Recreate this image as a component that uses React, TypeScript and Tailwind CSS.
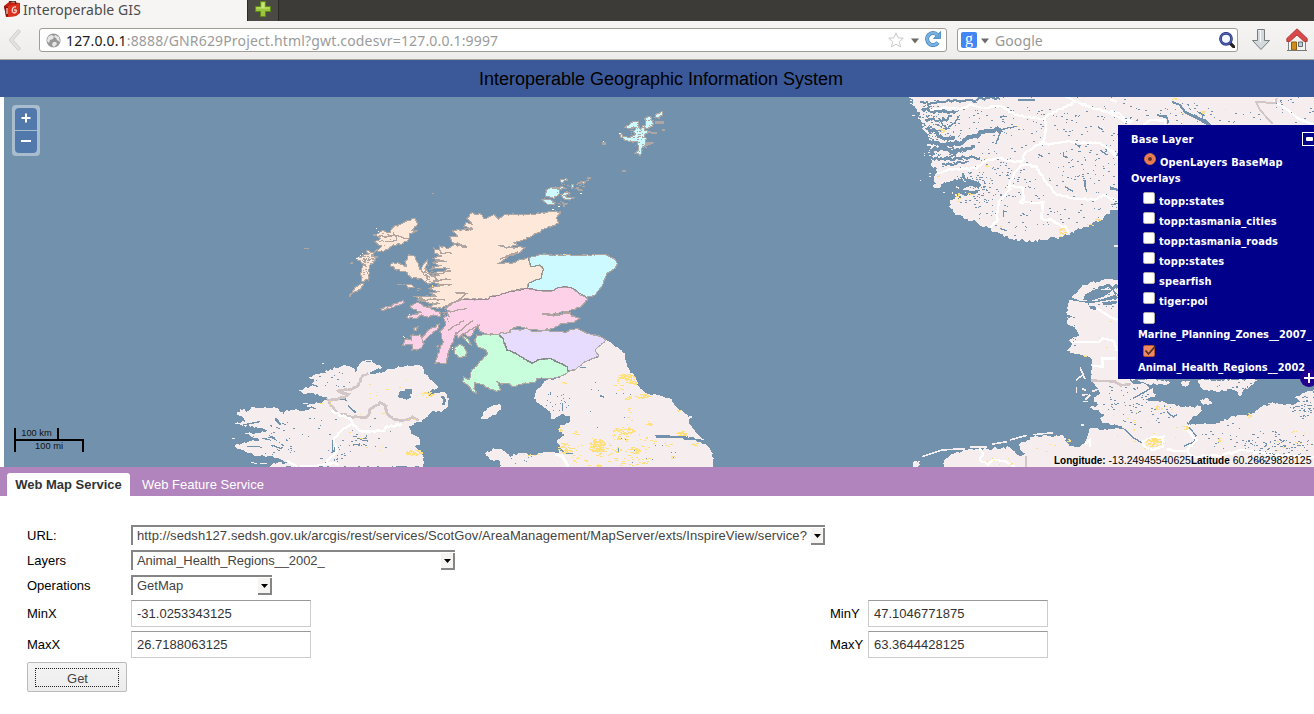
import type { ReactNode } from 'react';

/* ---------- map geometry helpers ---------- */

function createRandom(seed: number) {
  let s = seed * 7919 + 17;
  return () => {
    s = (s + 0x6d2b79f5) | 0;
    let t = Math.imul(s ^ (s >>> 15), 1 | s);
    t = (t + Math.imul(t ^ (t >>> 7), 61 | t)) ^ t;
    return ((t ^ (t >>> 14)) >>> 0) / 4294967296;
  };
}

// Splits every segment and pushes the new points sideways, for a ragged shore.
function ragged(points: string, amount: number, seed = 1, closed = true, step = 7) {
  const random = createRandom(seed);
  const pts = points.trim().split(/\s+/).map((p) => p.split(',').map(Number));
  const out: string[] = [];
  const last = closed ? pts.length : pts.length - 1;
  for (let i = 0; i < last; i++) {
    const [x1, y1] = pts[i];
    const [x2, y2] = pts[(i + 1) % pts.length];
    const len = Math.hypot(x2 - x1, y2 - y1) || 1;
    const n = Math.max(1, Math.round(len / step));
    for (let k = 0; k < n; k++) {
      const t = k / n;
      const d = k === 0 ? 0 : (random() - 0.5) * 2 * amount;
      out.push(
        `${(x1 + (x2 - x1) * t - ((y2 - y1) / len) * d).toFixed(1)},${(y1 + (y2 - y1) * t + ((x2 - x1) / len) * d).toFixed(1)}`,
      );
    }
  }
  if (!closed) out.push(pts[pts.length - 1].join(','));
  return 'M' + out.join('L') + (closed ? 'Z' : '');
}

// cx, cy, rx, ry, count
type Cluster = [number, number, number, number, number];

function specks(clusters: Cluster[], seed: number, long = 2) {
  const random = createRandom(seed);
  let d = '';
  for (const [cx, cy, rx, ry, n] of clusters) {
    for (let i = 0; i < n; i++) {
      const a = random() * Math.PI * 2;
      const r = Math.sqrt(random());
      const x = Math.round((cx + Math.cos(a) * r * rx) / 3) * 3;
      const y = Math.round((cy + Math.sin(a) * r * ry) / 3) * 3;
      const w = 3 + Math.floor(random() * long) * 3;
      d += `M${x},${y}h${w}v3h${-w}z`;
    }
  }
  return d;
}

const WATER = '#7291ad';
const LAND = '#f5edee';
const URBAN = '#ffe07a';
const SHORE = '#ada6a3';

function Tile({ x, y, children }: { x: number; y: number; children: ReactNode }) {
  return <g transform={`translate(${x} ${y}) scale(0.333333)`}>{children}</g>;
}

const highland =
  '395,38 405,45 420,41 432,55 450,50 462,44 475,58 492,45 520,42 550,45 600,40 625,35 662,35 650,55 656,70 620,85 580,105 545,122 520,128 535,136 505,141 475,136 500,144 558,142 540,158 510,166 475,190 515,190 545,178 565,172 572,200 600,195 610,208 603,235 565,250 563,265 535,270 510,275 480,285 450,290 445,298 370,298 330,310 305,325 265,318 300,312 262,308 230,300 262,302 225,290 290,290 270,278 300,275 268,265 285,258 310,255 270,248 295,240 272,232 300,226 275,220 305,215 330,205 278,205 300,197 276,188 310,185 280,175 305,168 284,160 282,145 300,152 300,138 325,146 340,135 380,142 335,125 330,110 352,108 335,92 375,90 400,88 372,80 376,68 395,72 380,55';

const pinkMain =
  '330,310 370,298 445,298 450,290 480,285 510,275 535,270 563,265 600,272 640,272 655,263 680,261 700,266 740,292 742,300 725,318 690,332 640,342 608,342 640,348 690,340 695,348 720,355 700,368 665,370 640,385 600,392 560,388 540,378 515,388 505,400 480,402 440,402 420,395 412,375 400,400 388,412 370,400 355,415 348,398 340,420 325,455 320,490 285,490 292,470 300,445 310,425 300,395 318,375 310,352 325,345 318,325';

const green =
  '410,405 480,402 478,410 490,418 500,450 530,462 575,490 600,478 630,475 660,490 683,500 685,515 660,530 640,535 590,535 585,548 550,550 520,560 505,550 485,553 470,543 482,570 470,575 450,568 430,555 405,548 402,565 410,580 395,572 382,555 368,545 370,530 388,538 395,510 430,475 443,462 435,448 415,442 405,425';

const cyan =
  '565,172 610,162 630,165 665,165 800,165 822,175 832,190 825,205 800,220 785,260 765,285 740,292 720,285 700,266 680,261 655,263 640,272 600,272 563,265 565,250 603,235 610,208 600,195 572,200';

const purple =
  '478,400 510,398 512,388 540,390 560,384 575,394 610,392 680,396 690,388 715,386 735,397 760,405 780,408 797,420 765,450 777,468 735,485 705,510 683,515 683,500 660,490 630,475 600,478 575,490 530,462 500,450 490,418';

const hebrides = [
  '100,105 125,92 150,97 160,82 190,68 225,55 232,72 215,92 234,92 208,102 205,118 190,130 160,135 145,148 130,155 105,153 125,138 105,125 120,115',
  '50,175 85,162 80,152 105,155 95,168 110,172 98,190 88,198 85,240 65,245 62,220 70,192',
  '52,258 70,250 62,268 45,275 30,290 38,272',
  '150,195 160,188 180,192 198,200 195,185 205,165 222,168 235,190 240,208 250,206 275,228 288,238 265,252 240,235 215,235 195,215 170,210',
  '198,255 210,252 222,262 205,265',
  '245,205 262,180 258,205 250,222',
];

const argyllIsles = [
  '210,318 235,308 250,318 270,322 300,338 300,350 280,345 265,352 245,345 225,355 200,352 225,342 245,338 215,325',
  '243,422 260,395 298,372 295,385 270,405 250,424',
  '188,435 195,418 215,420 212,408 240,404 252,430 245,445 215,452 218,435',
  '122,325 150,320 165,310 190,302 193,308 170,316 150,325 125,332',
  '220,388 235,378 230,392',
];

const ireland =
  '235,180 270,170 300,168 265,158 290,150 265,142 300,130 330,118 375,105 395,112 405,128 412,112 430,92 465,100 485,112 470,130 510,118 555,108 605,108 612,130 640,155 655,170 620,190 670,185 688,205 685,225 668,242 635,245 625,260 605,275 585,278 565,290 582,315 600,330 600,345 585,350 600,360 608,375 608,411 150,411 160,398 205,400 150,378 115,378 95,370 50,355 45,345 85,335 120,330 75,310 115,308 150,300 90,290 45,280 75,275 70,262 50,255 60,238 85,243 100,230 175,235 190,255 200,240 265,240 300,235 255,228 310,215 325,205 280,190 250,192';

const england =
  '325,125 355,108 385,92 418,78 402,50 435,30 460,45 485,60 495,75 500,110 530,150 540,175 560,190 590,195 630,205 655,235 685,260 700,262 686,268 690,285 715,315 733,330 715,328 680,318 700,330 740,345 758,370 760,400 755,413 325,413 295,375 300,345 290,335 315,315 297,305 300,285 325,280 330,260 305,253 290,262 275,268 270,245 240,225 220,205 230,180 260,150 300,145';

const norway =
  '30,2 700,2 700,340 654,340 610,370 560,395 510,418 480,425 430,435 360,437 325,428 295,415 265,398 235,385 190,370 160,350 148,335 150,315 172,305 155,290 210,290 160,280 190,262 120,262 118,278 102,278 105,240 112,220 95,213 90,190 105,180 88,165 95,155 80,145 85,125 65,100 72,85 50,70 60,58 45,40';

const denmark =
  '500,170 505,130 520,105 545,80 575,65 600,66 625,58 655,60 750,100 750,357 690,357 700,372 735,372 760,385 765,410 735,420 780,425 850,442 905,438 905,452 875,475 865,490 900,492 950,490 1000,468 1050,465 1085,440 1110,428 1180,435 1200,425 1185,412 1215,398 1242,390 1250,640 555,640 555,545 570,505 615,508 670,500 610,490 600,475 620,465 570,442 600,435 580,420 600,400 575,365 577,300 550,285 520,280 500,272 515,255 505,240 535,220 505,195';

function GisMap() {
  return (
    <svg
      className="block h-full w-full"
      viewBox="4 97 1310 370"
      preserveAspectRatio="none"
      shapeRendering="crispEdges"
      fill="none"
    >
      <rect x="4" y="97" width="1310" height="370" fill={WATER} />

      {/* Ireland */}
      <Tile x={220} y={330}>
        <path d={ragged(ireland, 4, 3)} fill={LAND} />
        <path d="M435,92l20-2v8h-18zM305,102h8M250,220h14M36,327h8M92,396l20,6M120,402h20" stroke={LAND} strokeWidth="3" />
        <path d="M540,183h15v-7h22v14l-8,5 5,8-14,6-28-8 5-9zM660,197h12l6,12-4,16h-8l4-14zM165,262l8,5 12,18-6 2-12-12zM335,205h42l5,8-18,-4-25,2zM385,225l25,22-6,2-22-20zM445,130l30-15 10,3-20,14zM145,315l18,6 8,12-16-8zM620,190h22l-12,10z" fill={WATER} />
        <path d="M338,335v28h8l-2-20zM410,325h30M425,332h20M400,345l20-3M155,345l30 12M80,350h40M125,325l25,4M70,285l50-10M300,385h10" stroke={WATER} strokeWidth="4" />
        <path d={specks([[330, 320, 200, 80, 34], [170, 325, 100, 50, 34], [410, 330, 40, 20, 16], [340, 150, 55, 30, 15], [350, 360, 25, 35, 18]], 14, 2)} fill={WATER} />
        <path d={ragged('445,130 430,135 415,165 395,178 355,183 385,192 370,203 325,210 330,225 355,250 390,260 440,262 452,235 480,218 498,228 500,248 525,268 555,270 578,260 595,272', 3, 2, false)} stroke="#d3c6c6" strokeWidth="8" />
        <path d={ragged('335,240 365,258 390,265 400,285 430,305 490,303 500,290 545,283', 3, 3, false)} stroke="#fff" strokeWidth="8" />
        <path d={ragged('400,282 365,300 342,325 350,365 320,395 355,405', 3, 6, false)} stroke="#fff" strokeWidth="7" />
        <path d="M200,392l30,17 M240,408h45l50-8" stroke="#fff" strokeWidth="7" />
        <path d={specks([[500, 210, 120, 80, 13], [622, 192, 18, 9, 24], [580, 367, 26, 10, 50], [415, 330, 80, 60, 5], [310, 225, 30, 20, 3]], 8, 3)} fill={URBAN} />
      </Tile>

      {/* England, Wales and the Isle of Man */}
      <Tile x={460} y={330}>
        <path d={ragged(england, 3, 5)} fill={LAND} />
        <path d={ragged('75,370 100,355 125,358 150,380 180,368 215,375 270,365 300,375 330,413 120,413 122,395 90,388', 3, 8)} fill={LAND} />
        <path d={ragged('60,268 70,245 95,228 118,222 125,235 105,255 80,268', 3, 9)} fill={LAND} />
        <path d="M290,345l25,22 28,4h-24l-30-16zM585,315h45v4h48l20 12h-22l-12-8h-75z" fill={WATER} />
        <path d="M360,112h18M272,187v8M308,220v22M475,350v16M420,197l12,4" stroke={WATER} strokeWidth="4" />
        <path d={specks([[290, 215, 38, 32, 19], [460, 230, 80, 110, 12], [560, 370, 90, 35, 10], [180, 390, 50, 15, 6]], 24, 1)} fill={WATER} />
        <path
          d={specks(
            [
              [497, 140, 25, 10, 62], [515, 155, 15, 10, 16], [485, 160, 28, 30, 18], [545, 198, 22, 7, 28],
              [410, 348, 25, 21, 120], [402, 365, 80, 43, 54], [313, 354, 20, 16, 50], [345, 308, 12, 5, 9],
              [490, 302, 32, 11, 66], [480, 320, 35, 12, 18], [520, 360, 18, 12, 34], [520, 355, 70, 50, 34],
              [663, 310, 16, 6, 24], [503, 204, 8, 5, 10], [565, 280, 8, 6, 9], [700, 340, 14, 7, 8],
              [640, 380, 12, 6, 8], [300, 297, 5, 10, 7], [280, 155, 35, 10, 4], [210, 374, 60, 4, 7],
              [505, 260, 10, 30, 7], [655, 240, 4, 6, 3], [520, 395, 60, 15, 16], [415, 405, 10, 5, 10], [620, 340, 20, 10, 5],
            ],
            31,
            3,
          )}
          fill={URBAN}
        />
        <path d="M285,372l20,5 12,18 8,16" stroke="#fff" strokeWidth="9" />
      </Tile>

      {/* Scottish animal health regions */}
      <Tile x={340} y={200}>
        <g stroke={SHORE} strokeWidth="3.4">
          <path d={ragged(highland, 2.5, 11)} fill="#fee8da" />
          <path d={ragged(pinkMain, 2, 12)} fill="#fdd2e9" />
          <path d={ragged(cyan, 1.6, 13)} fill="#ccfafe" />
          <path d={ragged(green, 2, 14)} fill="#c8fedc" />
          <path d={ragged(purple, 1.6, 15)} fill="#e7dcfd" />
          {hebrides.map((p, i) => (
            <path key={p} d={ragged(p, 3, i + 20)} fill="#fee8da" />
          ))}
          {argyllIsles.map((p, i) => (
            <path key={p} d={ragged(p, 2.5, i + 30)} fill="#fdd2e9" />
          ))}
          <path d={ragged('343,442 360,432 374,440 381,458 378,470 360,473 345,462', 2, 41)} fill="#c8fedc" />
          <path d="M363,405l12,6 10,7 8,16-8-4-12-13z" fill="#c8fedc" />
        </g>
        <path d={ragged('565,172 572,200 600,195 610,208 603,235 565,250 563,265', 1.6, 43, false)} stroke="#8f918f" strokeWidth="3" />
        <path d={ragged('370,298 445,298 450,290 480,285 510,275 535,270 563,265 600,272 640,272 655,263 680,261 700,266 740,292', 1.6, 44, false)} stroke="#9b8790" strokeWidth="3" />
        <path d={ragged('478,405 490,418 500,450 530,462 575,490 600,478 630,475 660,490 683,500 685,515', 1.6, 45, false)} stroke="#838a8a" strokeWidth="4" />
        <path
          d={[
            ragged('280,228 302,220 332,213', 3, 51, false),
            ragged('272,265 300,255 335,252', 3, 52, false),
            ragged('285,242 332,238', 3, 53, false),
            ragged('300,158 335,160', 3, 54, false),
            ragged('285,182 320,184', 3, 55, false),
            ragged('350,125 380,143', 3, 56, false),
            ragged('320,322 350,302 380,280 345,278', 2, 57, false),
            ragged('305,338 345,332 380,325', 2, 58, false),
            ragged('325,390 350,375 372,362', 2, 59, false),
            ragged('345,405 365,390 398,362', 2, 60, false),
            ragged('372,402 395,388 420,375', 2, 61, false),
            ragged('480,178 510,165 535,155', 2, 62, false),
            ragged('370,88 400,88', 2, 63, false),
            ragged('232,302 278,298 315,300', 2, 64, false),
            ragged('118,110 175,108 205,115', 3, 65, false),
            ragged('135,125 170,122 160,95', 3, 66, false),
            ragged('608,342 650,343 692,338', 2, 67, false),
          ].join('')}
          stroke="#b3a39f"
          strokeWidth="4"
        />
        <path d={specks([[85, 175, 25, 18, 44], [128, 115, 24, 22, 10], [75, 205, 12, 28, 16], [270, 228, 20, 16, 24], [265, 212, 14, 18, 14], [318, 342, 10, 26, 16], [233, 268, 8, 5, 8], [290, 440, 4, 10, 6], [32, 187, 6, 3, 3], [180, 252, 12, 2, 5], [95, 170, 14, 12, 10]], 61, 2)} fill={SHORE} />
        <path d={specks([[110, 90, 10, 8, 2], [60, 165, 40, 15, 4], [200, 345, 8, 6, 2], [190, 412, 6, 6, 2], [336, 445, 3, 10, 2]], 5, 1)} fill="#fff" />
        <path d="M670,162h8v4h-8zM275,255h5v5h-5z" fill={URBAN} />
      </Tile>

      {/* Orkney and Shetland */}
      <Tile x={530} y={100}>
        <g fill="#ccfafe" stroke={SHORE} strokeWidth="3.4">
          <path d={ragged('268,100 278,108 300,112 318,102 310,92 318,84 285,82 310,65 325,65 328,85 345,78 345,55 360,50 366,62 370,70 362,82 342,82 345,92 362,96 342,105 350,115 345,135 368,128 340,140 336,152 330,166 316,160 326,150 322,125 290,122 272,112', 3, 71)} />
          <path d={ragged('375,52 378,42 398,34 396,46 388,55', 3, 72)} />
          <path d={ragged('48,270 70,264 88,268 86,285 72,296 48,290', 3, 73)} />
          <path d={ragged('36,298 60,298 74,312 58,314', 3, 74)} />
          <path d={ragged('90,240 108,234 112,240 98,248', 3, 75)} />
          <path d={ragged('80,262 98,260 106,266 84,268', 3, 76)} />
          <path d={ragged('92,284 110,276 120,280 100,286 118,292 134,292 118,300 100,296', 3, 77)} />
          <path d={ragged('138,255 155,244 160,252 176,240', 3, 78)} />
          <path d={ragged('140,264 160,272 148,272', 3, 79)} />
          <path d="M98,308l8,4-4,8zM124,253h6v10h-6zM217,128h9v4h-9zM278,211h9v3h-9zM366,98h14v3h-14zM378,66h22v3h-22zM398,90h6v1h-6zM352,128h16v3h-16zM172,233h10v2h-10z" />
        </g>
        <path d={specks([[320, 92, 25, 20, 26], [355, 70, 15, 18, 14], [330, 125, 18, 28, 16], [105, 270, 26, 26, 16], [85, 310, 25, 8, 10], [145, 258, 20, 12, 9]], 80, 2)} fill={SHORE} />
        <path d="M84,318h7v3h-7zM150,279h6v3h-6zM268,98h4v4h-4zM67,328h4v3h-4zM218,124h4v3h-4z" fill="#fff" />
      </Tile>
      <path d="M304,248h5v1h-5zM432,193h2v1h-2z" fill={SHORE} />

      {/* Norway and Sweden */}
      <path d="M1114,97h200v150h-200z" fill={LAND} />
      <Tile x={900} y={95}>
        <path d={ragged(norway, 6, 91, true, 6)} fill={LAND} />
        <g stroke={WATER}>
          <path d={ragged('60,22 100,25 140,18 180,20 230,15 260,8 300,12', 5, 92, false)} strokeWidth="6" />
          <path d={ragged('65,42 95,50 130,45 165,55', 5, 93, false)} strokeWidth="8" />
          <path d={ragged('75,75 100,70 125,80 155,62', 5, 94, false)} strokeWidth="6" />
          <path d={ragged('80,100 110,112 115,125 140,130 165,128', 5, 95, false)} strokeWidth="10" />
          <path d={ragged('80,143 115,145 150,150 190,140 215,125 250,112 285,105 305,104', 5, 96, false)} strokeWidth="12" />
          <path d={ragged('300,105 325,98 358,96', 2, 97, false)} strokeWidth="4" />
          <path d={ragged('305,105 295,125 288,148', 2, 98, false)} strokeWidth="4" />
          <path d={ragged('90,168 120,160 160,172 200,160 225,155', 5, 99, false)} strokeWidth="10" />
          <path d={ragged('90,188 130,192 175,190 215,185 240,190', 5, 100, false)} strokeWidth="7" />
          <path d={ragged('125,205 165,208 200,200', 4, 101, false)} strokeWidth="6" />
          <path d={ragged('130,270 165,262 195,270 240,265', 6, 102, false)} strokeWidth="17" />
          <path d={ragged('160,290 190,296 235,290', 6, 103, false)} strokeWidth="9" />
          <path d={ragged('190,235 195,255 220,262', 4, 104, false)} strokeWidth="7" />
          <path d={ragged('125,90 145,100 165,85 180,60', 4, 105, false)} strokeWidth="4" />
          <path d={ragged('150,145 165,180 140,195', 4, 106, false)} strokeWidth="5" />
          <path d="M555,255v20l5,15M495,275l25,15M600,165l22,15M490,170v15l15,2M415,178l15,7M310,345v20M300,400l20,8M595,95l12,10M520,140l20,18M355,15h50M300,65h20" strokeWidth="4" />
        </g>
        <path d={specks([[95, 75, 40, 60, 85], [130, 130, 60, 55, 75], [145, 185, 50, 30, 46], [205, 265, 50, 35, 50], [230, 300, 60, 45, 36], [300, 250, 100, 60, 36], [350, 340, 150, 80, 60], [230, 60, 110, 50, 34], [420, 150, 200, 120, 95], [550, 230, 100, 90, 50], [520, 80, 130, 70, 32], [250, 220, 80, 50, 30], [500, 350, 110, 35, 18]], 45, 2)} fill={WATER} />
        <g stroke="#fff" strokeWidth="7">
          <path d={ragged('90,45 130,38 180,42 215,28 260,40 300,32 345,60 400,68 435,72 438,100 430,140 375,175 365,205', 3, 110, false)} />
          <path d={ragged('430,70 460,52 500,35 530,20', 3, 111, false)} />
          <path d={ragged('110,235 150,222 230,220 260,195 300,188 340,200 365,200', 3, 112, false)} />
          <path d={ragged('365,208 345,230 325,275 370,278 372,315 360,322 430,322 425,370 460,378 500,400 505,415', 3, 113, false)} />
          <path d={ragged('365,208 410,215 430,250 465,295 520,310 585,315 610,300 655,325', 3, 114, false)} />
          <path d={ragged('335,280 295,320 290,380 270,398', 3, 115, false)} />
          <path d={ragged('420,150 500,140 600,145 640,170 655,190', 3, 116, false)} />
          <path d={ragged('495,5 540,25 620,50 690,85', 3, 117, false)} />
        </g>
        <path d={specks([[122, 108, 8, 10, 12], [115, 242, 6, 4, 6], [173, 305, 8, 14, 12], [212, 296, 10, 3, 6], [485, 410, 10, 14, 18], [590, 374, 12, 4, 10], [255, 210, 8, 3, 5], [350, 140, 170, 80, 5], [303, 393, 4, 3, 3], [570, 388, 10, 4, 4]], 49, 2)} fill={URBAN} />
        <path d={specks([[35, 20, 12, 8, 4], [42, 58, 6, 4, 2], [60, 256, 3, 2, 1], [132, 290, 3, 2, 1], [80, 180, 8, 30, 4], [90, 235, 8, 15, 3]], 77, 2)} fill={LAND} />
      </Tile>
      <Tile x={1110} y={95}>
        <path d="M187,18l25,10 15,20 40,18 22,8 16,18h-12l-30-18-40-20-16-22-20-7zM255,45l22,10 12,10-20-8zM140,58l30,2 8,22-8,8 2-18-32-10z" fill={WATER} />
        <path d="M0,345h24v105H0zM0,285l24,2v-5l-24-8z" fill={WATER} />
        <path d="M0,48l30,8 20,20 20,2 M100,90l20-15 45,2v14M490,18l45,28 30,25 45,18M20,20l-20-6M0,168l20,20M5,310l20,10" stroke="#fff" strokeWidth="7" />
        <path d="M500,8l-2,16-60-3 12,24 38,42" stroke="#d3c6c6" strokeWidth="6" />
        <path d={specks([[60, 50, 60, 40, 16], [230, 50, 90, 40, 32], [390, 70, 70, 20, 12], [540, 45, 70, 40, 18], [12, 140, 12, 100, 12], [12, 325, 10, 15, 13]], 52, 2)} fill={WATER} />
        <path d={specks([[193, 10, 9, 3, 7], [278, 50, 9, 4, 10], [220, 54, 4, 3, 2], [345, 40, 3, 3, 1]], 54, 2)} fill={URBAN} />
      </Tile>

      {/* Denmark, Germany and the Netherlands */}
      <Tile x={900} y={260}>
        <path d={ragged(denmark, 4, 121)} fill={LAND} />
        <path d={ragged('130,612 150,585 200,570 330,562 360,588 375,580 355,555 400,530 490,525 510,560 540,562 560,545 570,640 130,640', 4, 122)} fill={LAND} />
        <path d={ragged('40,605 60,602 55,620 38,622', 3, 123)} fill={LAND} />
        <path d={ragged('895,360 1075,360 1060,372 1030,392 1022,408 1005,392 930,392 898,382', 5, 124)} fill={LAND} />
        <path d={ragged('835,362 870,362 858,385', 4, 125)} fill={LAND} />
        <path d={ragged('900,420 918,414 938,430 910,434', 3, 126)} fill={LAND} />
        <path d={ragged('690,357 760,357 820,366 790,374 745,372', 4, 127)} fill={LAND} />
        <path d="M65,590l60-20 70-4M210,562h50M275,553l45-8M330,540l50-14M400,524l60-6M528,360l20-15M530,380v18M545,385l12,6M545,405l20-2M550,425h14M543,495h8M555,420l15-15M575,395l22-8M540,322l15,35" stroke={LAND} strokeWidth="5" />
        <path d="M505,195l20,8 12,22-12,8-20-12zM510,120l60,10 85-15-20-25-50-2-30,15-5,15 20,6 40-14 30-20 14,12-60,20-50,2-34-14zM568,138l22,2-4,10-16-4zM500,165l18,3-12,8zM495,540l28,4 8,14-25-4z" fill={WATER} />
        <path d={ragged('570,105 620,78 655,82', 5, 129, false) + ragged('610,130 650,125', 5, 130, false)} stroke={WATER} strokeWidth="9" />
        <path d="M625,500l45,5 30,28 25,15M700,415l35-20 20-12M800,455l20,16 12-8M862,485l8,20 18,22-6,18-30,14" stroke={WATER} strokeWidth="4" />
        <path d="M512,245l85,2 10-12 35,8 8,30 M580,318l28,2v-24h40M590,145l40,25 22,10" stroke="#fff" strokeWidth="7" />
        <path d="M573,362l70,2 20,12 30-4M378,588v40" stroke="#d3c6c6" strokeWidth="8" />
        <path d={ragged('728,545 750,535 790,530 788,560 760,570 735,560', 4, 131)} stroke="#fff" strokeWidth="7" />
        <path d={ragged('800,570 860,572 890,540 862,510 868,495', 3, 132, false) + ragged('860,572 880,590 960,588 1030,570 1120,585 1242,592', 4, 133, false) + ragged('238,565 250,580 240,600 265,615 280,598 320,605 345,618', 3, 134, false) + ragged('555,552 570,540 570,560', 2, 135, false)} stroke="#fff" strokeWidth="7" />
        <path d={specks([[1100, 560, 70, 50, 75], [720, 440, 100, 60, 50], [960, 525, 70, 50, 20], [1205, 440, 35, 35, 50], [605, 110, 60, 40, 34], [650, 410, 50, 40, 20], [1185, 555, 55, 35, 30], [520, 230, 12, 60, 12], [1120, 430, 30, 6, 12], [1000, 375, 70, 12, 14]], 59, 2)} fill={WATER} />
        <path d={specks([[760, 546, 24, 12, 70], [775, 442, 14, 8, 16], [853, 502, 12, 5, 14], [1044, 466, 8, 7, 9], [955, 535, 5, 9, 8], [740, 500, 120, 70, 28], [550, 285, 6, 4, 5], [1180, 560, 60, 50, 18], [430, 560, 40, 20, 5], [640, 250, 50, 90, 4], [300, 600, 60, 15, 7], [503, 542, 6, 4, 5]], 57, 2)} fill={URBAN} />
      </Tile>
    </svg>
  );
}

/* ---------- browser chrome ---------- */

function BrowserTabs() {
  return (
    <div className="flex h-[21px] bg-[#3c3b37]">
      <div className="flex h-full w-[247px] items-start bg-[#f6f5f4] pl-1">
        <svg className="mt-px h-4 w-4 shrink-0" viewBox="0 0 16 16">
          <path d="M0 5 5 1l11 1v10l-4 3-10 1z" fill="#c5200f" />
          <path d="M0 5l4 1v10l-2-1z" fill="#85150c" />
          <path d="M4 5l12-3-1 10-3 3-8 1z" fill="#d93320" />
          <path d="M5 1l3-1h3l1 3" fill="none" stroke="#442820" strokeWidth="1.4" />
          <path d="M12 6c-4-1-5 5-2 6 2 0 3-2 2-3h-2M3 7v6" fill="none" stroke="#f7d0c8" strokeWidth="1.3" />
        </svg>
        <span className="ml-[3px] font-['Noto_Sans',sans-serif] text-[14px] leading-[19px] tracking-[0.08px] text-[#4c4c4c]">
          Interoperable GIS
        </span>
      </div>
      <div className="flex w-8 justify-center border-x border-[#2b2a27] bg-[#4a4944] pt-[1px]">
        <svg className="h-4 w-4" viewBox="0 0 16 16">
          <path d="M5.5.5h5v5h5v5h-5v5h-5v-5h-5v-5h5z" fill="#9bc63b" stroke="#5d8c16" />
          <path d="M6.5 1.5h3v5h5v1h-13v-1h5z" fill="#c9e67b" />
        </svg>
      </div>
    </div>
  );
}

function Caret() {
  return (
    <svg className="h-[6px] w-[8px] shrink-0" viewBox="0 0 8 6">
      <path d="M0 .5h8L4 5.5z" fill="#6c6b69" />
    </svg>
  );
}

function BrowserToolbar() {
  return (
    <div className="flex h-[39px] items-center border-b border-[#aaa59f] bg-gradient-to-b from-[#f6f5f4] to-[#efedeb] font-['Noto_Sans',sans-serif] text-[14px]">
      <svg className="ml-[7px] h-[22px] w-[15px]" viewBox="0 0 15 22">
        <path d="M11.5 2.5 4 11l7.5 8.5" fill="none" stroke="#cfcdca" strokeWidth="4" strokeLinecap="round" strokeLinejoin="round" />
        <path d="M11.5 2.5 4 11l7.5 8.5" fill="none" stroke="#e4e2df" strokeWidth="2.4" strokeLinecap="round" strokeLinejoin="round" />
      </svg>
      <div className="ml-[17px] flex h-6 w-[908px] items-center rounded-[3px] border border-[#a09d99] bg-white pl-[6px] pr-[5px]">
        <svg className="h-[15px] w-[15px]" viewBox="0 0 15 15">
          <circle cx="7.5" cy="7.5" r="7" fill="#989898" />
          <path d="M2 4l3-2 3 1-1 3-3 1-1 3-2-2zM9 2l4 2 1 5-3-2-1-2-2-1zM7 9l3 0 1 2-3 3-2-2z" fill="#e6e6e6" />
        </svg>
        <span className="ml-[5px] mt-[2px] whitespace-nowrap leading-[22px] tracking-[0.16px] text-[#9b9b9b]">
          <span className="text-[#202020]">127.0.0.1</span>:8888/GNR629Project.html?gwt.codesvr=127.0.0.1:9997
        </span>
        <div className="ml-auto flex items-center">
          <svg className="h-4 w-4" viewBox="0 0 16 16">
            <path d="M8 .8l2 5 5.3.4-4 3.5 1.2 5.3L8 12.2 3.500 15l1.200-5.300-4-3.500L6 5.800z" fill="#fff" stroke="#c9c9c9" />
          </svg>
          <span className="ml-[7px] mt-[2px]">
            <Caret />
          </span>
          <svg className="-mt-[2px] ml-[6px] h-4 w-4" viewBox="0 0 16 16">
            <path d="M13 11.500A6 6 0 1 1 12.500 4" fill="none" stroke="#4583bd" strokeWidth="4" />
            <path d="M15.600.5v7H8.500z" fill="#65a5d8" stroke="#4583bd" strokeWidth=".8" />
            <path d="M13 11.500A6 6 0 1 1 12.500 4" fill="none" stroke="#79b2df" strokeWidth="2.600" />
          </svg>
        </div>
      </div>
      <div className="ml-[10px] flex h-6 w-[281px] items-center rounded-[3px] border border-[#a09d99] bg-white pl-[3px] pr-[2px]">
        <span className="flex h-4 w-4 items-center justify-center rounded-[2px] bg-[#4285f4] pb-[3px] font-['Liberation_Serif',serif] text-[16px] leading-none text-white">
          g
        </span>
        <span className="ml-[4px] flex pt-[2px]">
          <Caret />
        </span>
        <span className="ml-[6px] mt-[2px] leading-[22px] tracking-[0.1px] text-[#979797]">Google</span>
        <svg className="-mt-[1px] ml-auto h-4 w-4" viewBox="0 0 16 16">
          <path d="M11 11l3.800 3.800" stroke="#26231f" strokeWidth="3.200" strokeLinecap="round" />
          <circle cx="7" cy="6.800" r="5.500" fill="#f3f6fd" stroke="#2d3a86" strokeWidth="2.800" />
          <circle cx="7" cy="6.800" r="5.500" fill="none" stroke="#5d70c5" strokeWidth=".9" />
        </svg>
      </div>
      <svg className="ml-[14px] h-[22px] w-[18px]" viewBox="0 0 18 22">
        <path d="M5.500.5h7v11h5L9 20.500l-8.500-9h5z" fill="#d4d9db" stroke="#777c7d" />
        <path d="M6.500 1.500h2v12" stroke="#f7f8f8" fill="none" />
      </svg>
      <svg className="ml-[16px] h-6 w-[22px] shrink-0" viewBox="0 0 22 24">
        <path d="M2.500 12v10.500h17V12L11 4z" fill="#f3f2ee" stroke="#80807d" />
        <path d="M11 .8.800 10.500V13.500h3L11 7l7.200 6.500h3v-3z" fill="#d9494b" stroke="#a32a2c" strokeWidth=".8" />
        <path d="M5.500 14h5v8h-5z" fill="#cf8d20" stroke="#925c0c" />
        <path d="M12.500 14h4v4.500h-4z" fill="#b9cfdf" stroke="#63696c" />
        <path d="M1 22.500h20" stroke="#777" />
      </svg>
    </div>
  );
}

/* ---------- layer switcher ---------- */

function Checkbox({ checked = false }: { checked?: boolean }) {
  if (!checked) return <span className="block h-3 w-3 rounded-[2px] border border-[#b0aaa2] bg-white" />;
  return (
    <svg className="h-3 w-[14px]" viewBox="0 0 14 12">
      <rect x=".5" y=".5" width="11" height="11" rx="1.500" fill="#f08a61" stroke="#b5512f" />
      <path d="M2.500 5.500 5.500 9 12.500 1" fill="none" stroke="#4e3026" strokeWidth="1.800" />
    </svg>
  );
}

function LayerSwitcher() {
  const overlays = ['topp:states', 'topp:tasmania_cities', 'topp:tasmania_roads', 'topp:states', 'spearfish', 'tiger:poi'];
  return (
    <div className="absolute right-0 top-[28px] h-[254px] w-[196px] overflow-hidden whitespace-nowrap bg-[#00008b] font-['DejaVu_Sans_Condensed','DejaVu_Sans',sans-serif] text-[11px] font-bold leading-[14px] text-white [font-stretch:condensed]">
      <div className="ml-[13px] mt-[8px] tracking-[0.17px]">Base Layer</div>
      <div className="ml-[26px] mt-[6px] flex h-[19px] tracking-[0.17px]">
        <svg className="h-3 w-3" viewBox="0 0 12 12">
          <circle cx="6" cy="6" r="5.500" fill="#f58b62" stroke="#c15f3c" />
          <circle cx="6" cy="6" r="3.400" fill="none" stroke="#d76a46" />
          <circle cx="6" cy="6" r="2" fill="#633221" />
        </svg>
        <span className="ml-[4px] mt-[3px]">OpenLayers BaseMap</span>
      </div>
      <div className="ml-[13px] tracking-[0.17px]">Overlays</div>
      <div className="mt-[6px] tracking-[0.09px]">
        {overlays.map((name, i) => (
          <div key={i} className="ml-[25px] flex h-5">
            <Checkbox />
            <span className="ml-[4px] mt-[3px]">{name}</span>
          </div>
        ))}
      </div>
      <div className="ml-[25px] h-4">
        <Checkbox />
      </div>
      <div className="ml-[20px] h-[17px]">Marine_Planning_Zones__2007_</div>
      <div className="ml-[25px] h-4">
        <Checkbox checked />
      </div>
      <div className="ml-[20px]">Animal_Health_Regions__2002</div>
      <div className="absolute right-[-2px] top-[7px] flex h-[14px] w-[14px] items-center justify-center border border-white">
        <span className="h-[4px] w-[7px] rounded-[1px] bg-white" />
      </div>
    </div>
  );
}

function ScaleLine() {
  return (
    <div className="absolute bottom-[15px] left-[10px] font-['Liberation_Sans',sans-serif] text-[9.500px] leading-[11px] text-[#111]">
      <div className="h-[13px] w-[45px] border-x-2 border-b-2 border-black text-center text-[9.300px]">100 km</div>
      <div className="-mt-[2px] h-[13px] w-[70px] border-x-2 border-t-2 border-black text-center text-[9.300px]">100 mi</div>
    </div>
  );
}

function MapPanel() {
  return (
    <div className="relative ml-1 h-[370px] overflow-hidden">
      <GisMap />
      <div className="absolute left-2 top-2 w-7 rounded-[4px] bg-white/40 p-[3px]">
        <button className="flex h-[22px] w-[22px] items-center justify-center rounded-t-[4px] bg-[#5279ab] pb-[2px]" aria-label="Zoom in">
          <svg className="h-[10px] w-[10px]" viewBox="0 0 10 10">
            <path d="M5 .5v9M.5 5h9" stroke="#fff" strokeWidth="2" />
          </svg>
        </button>
        <button className="mt-px flex h-[22px] w-[22px] items-center justify-center rounded-b-[4px] bg-[#5279ab] pb-[2px]" aria-label="Zoom out">
          <span className="h-[2px] w-[10px] bg-white" />
        </button>
      </div>
      <ScaleLine />
      <LayerSwitcher />
      <div className="absolute right-[-4px] top-[272px] flex h-[18px] w-[18px] items-center justify-center rounded-full bg-[#20008c]">
        <svg className="h-[10px] w-[10px]" viewBox="0 0 10 10">
          <path d="M5 0v10M0 5h10" stroke="#fff" strokeWidth="2" />
        </svg>
      </div>
      <div className="absolute left-[1050px] top-[357px] whitespace-nowrap font-['Liberation_Sans',sans-serif] text-[10.500px] leading-[13px] text-black">
        <b className="text-[10px]">Longitude:</b> -13.24945540625<b className="text-[10px]">Latitude</b> 60.26629828125
      </div>
    </div>
  );
}

/* ---------- request form ---------- */

function Select({ value, className }: { value: string; className: string }) {
  return (
    <div className={`flex h-5 items-stretch border-l-2 border-t-2 border-[#858585] bg-white pl-1 text-[#444] ${className}`}>
      <span className="flex-1 whitespace-nowrap leading-[18px]">{value}</span>
      <span className="mt-px flex h-[17px] w-[14px] items-center justify-center border-b-2 border-r-2 border-[#858585] bg-[#f5f4f2]">
        <svg className="h-[4px] w-[7px]" viewBox="0 0 7 4">
          <path d="M0 0h7L3.500 4z" fill="#000" />
        </svg>
      </span>
    </div>
  );
}

function TextField({ value }: { value: string }) {
  return (
    <div className="h-[27px] w-[180px] border border-[#ccc] border-t-[#999] bg-white pl-[5px] leading-[25px] text-[#333]">
      {value}
    </div>
  );
}

function Label({ children }: { children: ReactNode }) {
  return <span className="w-[104px] shrink-0">{children}</span>;
}

function RequestForm() {
  return (
    <div className="flex flex-col pl-[27px] pt-[29px] text-[13px] leading-[22px] text-black">
      <div className="flex h-[25px]">
        <Label>URL:</Label>
        <Select
          className="w-[694px] tracking-[0.086px]"
          value="http://sedsh127.sedsh.gov.uk/arcgis/rest/services/ScotGov/AreaManagement/MapServer/exts/InspireView/service?"
        />
      </div>
      <div className="flex h-[25px]">
        <Label>Layers</Label>
        <Select className="w-[324px] tracking-[-0.09px]" value="Animal_Health_Regions__2002_" />
      </div>
      <div className="flex h-[25px]">
        <Label>Operations</Label>
        <Select className="w-[141px]" value="GetMap" />
      </div>
      <div className="flex h-[31px] leading-[27px]">
        <Label>MinX</Label>
        <TextField value="-31.0253343125" />
        <span className="ml-[519px] w-[38px]">MinY</span>
        <TextField value="47.1046771875" />
      </div>
      <div className="flex h-[31px] leading-[27px]">
        <Label>MaxX</Label>
        <TextField value="26.7188063125" />
        <span className="ml-[519px] w-[38px]">MaxY</span>
        <TextField value="63.3644428125" />
      </div>
      <button className="h-[30px] w-[100px] rounded-[2px] border border-[#bbb] bg-gradient-to-b from-[#f4f4f4] to-[#ececec] p-[5px] px-[7px] text-[#444]">
        <span className="block h-[19px] border border-dotted border-[#222] pl-px leading-[20px]">Get</span>
      </button>
    </div>
  );
}

export default function App() {
  return (
    <div className="h-[714px] w-[1314px] overflow-hidden bg-white font-['Liberation_Sans',Arial,sans-serif]">
      <BrowserTabs />
      <BrowserToolbar />
      <header className="h-[37px] bg-[#3b5998] pl-[8px] text-center text-[18px] leading-[38px] text-black">
        Interoperable Geographic Information System
      </header>
      <MapPanel />
      <nav className="flex h-[29px] items-end bg-[#b184bd] pl-[7px] text-[13px] leading-[23px]">
        <span className="w-[123px] rounded-t-[3px] bg-white text-center font-bold text-[#333]">Web Map Service</span>
        <span className="ml-[12px] text-white">Web Feature Service</span>
      </nav>
      <RequestForm />
    </div>
  );
}
